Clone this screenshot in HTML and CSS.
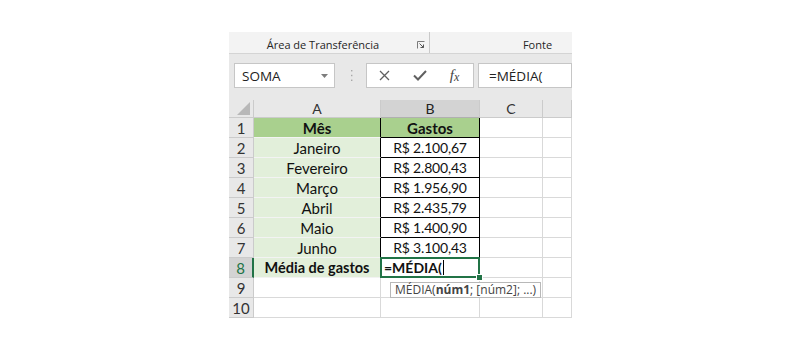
FILE: index.html
```html
<!DOCTYPE html>
<html lang="pt-BR">

<head>
    <meta charset="UTF-8">
    <title>Média de gastos</title>
    <link rel="stylesheet" href="styles.css">
</head>

<body>

    <div class="window">

        <!-- Ribbon group labels -->
        <div class="ribbon">
            <div class="group group-clip">
                <span class="group-label">Área de Transferência</span>
                <svg class="launcher" width="8" height="8" viewBox="0 0 8 8">
                    <path d="M0.5 7.5V0.5H7.5" fill="none" stroke="#7a7a7a" stroke-width="1"/>
                    <path d="M2.5 2.5L6.5 6.5M3.5 6.5H6.5V3.5" fill="none" stroke="#555" stroke-width="1"/>
                </svg>
            </div>
            <div class="group group-font">
                <span class="group-label">Fonte</span>
            </div>
        </div>

        <!-- Formula bar -->
        <div class="formula-bar">
            <div class="name-box">
                <span>SOMA</span>
                <svg width="7" height="4" viewBox="0 0 7 4"><path d="M0 0H7L3.5 4Z" fill="#7d7d7d"/></svg>
            </div>
            <div class="grip">
                <svg width="3" height="11" viewBox="0 0 3 11">
                    <rect x="1" y="0" width="1.4" height="1.4" fill="#a8a8a8"/>
                    <rect x="1" y="4.8" width="1.4" height="1.4" fill="#a8a8a8"/>
                    <rect x="1" y="9.6" width="1.4" height="1.4" fill="#a8a8a8"/>
                </svg>
            </div>
            <div class="fx-box">
                <span class="fx-btn">
                    <svg width="11" height="11" viewBox="0 0 11 11"><path d="M1 1L10 10M10 1L1 10" stroke="#606060" stroke-width="1.3"/></svg>
                </span>
                <span class="fx-btn">
                    <svg width="14" height="11" viewBox="0 0 14 11"><path d="M1 5.5L5 9.5L13 1" fill="none" stroke="#606060" stroke-width="2"/></svg>
                </span>
                <span class="fx-btn fx-label"><i>f</i><i class="x">x</i></span>
            </div>
            <div class="formula-input">=MÉDIA(</div>
        </div>

        <!-- Sheet -->
        <div class="grid">
            <div class="ch corner">
                <svg width="13" height="13" viewBox="0 0 13 13"><path d="M13 0V13H0Z" fill="#b8b8b8"/></svg>
            </div>
            <div class="ch">A</div>
            <div class="ch ch-active">B</div>
            <div class="ch">C</div>
            <div class="ch"></div>

            <div class="rh">1</div>
            <div class="c col-a head">Mês</div>
            <div class="c col-b head">Gastos</div>
            <div class="c"></div>
            <div class="c"></div>

            <div class="rh">2</div>
            <div class="c col-a fill">Janeiro</div>
            <div class="c col-b money">R$ 2.100,67</div>
            <div class="c"></div>
            <div class="c"></div>

            <div class="rh">3</div>
            <div class="c col-a fill">Fevereiro</div>
            <div class="c col-b money">R$ 2.800,43</div>
            <div class="c"></div>
            <div class="c"></div>

            <div class="rh">4</div>
            <div class="c col-a fill">Março</div>
            <div class="c col-b money">R$ 1.956,90</div>
            <div class="c"></div>
            <div class="c"></div>

            <div class="rh">5</div>
            <div class="c col-a fill">Abril</div>
            <div class="c col-b money">R$ 2.435,79</div>
            <div class="c"></div>
            <div class="c"></div>

            <div class="rh">6</div>
            <div class="c col-a fill">Maio</div>
            <div class="c col-b money">R$ 1.400,90</div>
            <div class="c"></div>
            <div class="c"></div>

            <div class="rh">7</div>
            <div class="c col-a fill">Junho</div>
            <div class="c col-b money">R$ 3.100,43</div>
            <div class="c"></div>
            <div class="c"></div>

            <div class="rh rh-active">8</div>
            <div class="c col-a fill bold">Média de gastos</div>
            <div class="c active">=MÉDIA(<span class="caret"></span>
                <div class="tooltip">MÉDIA(<b>núm1</b>; [núm2]; ...)</div>
            </div>
            <div class="c"></div>
            <div class="c"></div>

            <div class="rh">9</div>
            <div class="c"></div>
            <div class="c"></div>
            <div class="c"></div>
            <div class="c"></div>

            <div class="rh">10</div>
            <div class="c"></div>
            <div class="c"></div>
            <div class="c"></div>
            <div class="c"></div>
        </div>

    </div>

</body>

</html>
```

FILE: styles.css
```css
body {
    margin: 0;
    background: #fff;
    font-family: Lato, "Liberation Sans", sans-serif;
    color: #111;
}

.window {
    margin: 32px 0 0 229px;
    width: 343px;
    overflow: hidden;
}

/* ribbon */
.ribbon {
    display: flex;
    height: 22px;
    box-sizing: border-box;
    background: #f3f3f3;
    border-bottom: 1px solid #d4d4d4;
    font-family: "Open Sans", sans-serif;
    font-size: 11px;
    color: #262626;
}

.group {
    flex: none;
    display: flex;
    align-items: center;
    padding-top: 3px;
    box-sizing: border-box;
}

.group-clip {
    width: 201px;
    padding-right: 4px;
    border-right: 1px solid #c9c9c9;
}

.group-font {
    width: 215px;
}

.group-label {
    flex: 1;
    text-align: center;
}

.launcher {
    margin-top: 1px;
}

/* formula bar */
.formula-bar {
    display: flex;
    align-items: flex-start;
    height: 46px;
    box-sizing: border-box;
    padding: 9px 0 0 5px;
    background: #e8e8e8;
    font-family: "Open Sans", sans-serif;
    font-size: 13.5px;
    color: #222;
}

.name-box,
.fx-box,
.formula-input {
    height: 25px;
    box-sizing: border-box;
    background: #fff;
    border: 1px solid #c6c6c6;
    display: flex;
    align-items: center;
}

.name-box {
    flex: none;
    width: 101px;
    padding: 0 6px 0 7px;
    justify-content: space-between;
}

.grip {
    flex: none;
    height: 25px;
    display: flex;
    align-items: center;
    margin: 0 13px 0 15px;
}

.fx-box {
    flex: none;
    width: 108px;
}

.fx-btn {
    width: 35px;
    display: flex;
    justify-content: center;
}

.fx-label {
    font-family: "Liberation Serif", serif;
    font-size: 15px;
    color: #444;
}

.fx-label .x {
    font-size: 12px;
    margin-top: 3px;
}

.formula-input {
    flex: 1;
    margin-left: 4px;
    padding-left: 10px;
}

/* sheet grid */
.grid {
    display: grid;
    grid-template-columns: 25px 127px 99px 63px 29px;
    grid-template-rows: 18px repeat(10, 20px);
    font-size: 15px;
}

.grid > div {
    box-sizing: border-box;
    border-right: 1px solid #d9d9d9;
    border-bottom: 1px solid #d9d9d9;
    display: flex;
    align-items: center;
    justify-content: center;
    white-space: nowrap;
}

.ch,
.rh {
    background: #e8e8e8;
    color: #333;
}

.grid > .ch {
    border-color: #cbcbcb;
    font-size: 14px;
}

.grid > .rh {
    border-color: #cbcbcb;
}

.grid > .corner {
    justify-content: flex-end;
    align-items: flex-end;
    padding: 0 3px 2px 0;
}

.grid > .ch-active {
    background: #d3d3d3;
    color: #222;
    border-bottom-color: #b0b0b0;
}

.grid > .rh-active {
    background: #d3d3d3;
    color: #217346;
    border-right: 2px solid #217346;
}

.grid > .col-a {
    border-right-color: #000;
    border-bottom-color: #f3f3f3;
}

.grid > .col-b {
    border-right-color: #000;
    border-bottom-color: #000;
}

.money {
    font-size: 14px;
    letter-spacing: -0.2px;
}

.head {
    background: #a9d08e;
    font-weight: bold;
}

.fill {
    background: #e2efda;
}

.bold {
    font-weight: bold;
    font-size: 14.5px;
}

.grid > .active {
    position: relative;
    justify-content: flex-start;
    padding-left: 3px;
    font-weight: bold;
    font-size: 14px;
}

.active::before {
    content: "";
    position: absolute;
    top: -1px;
    left: -1px;
    right: -1px;
    bottom: -1px;
    border: 2px solid #217346;
}

.active::after {
    content: "";
    position: absolute;
    right: -4px;
    bottom: -4px;
    width: 5px;
    height: 5px;
    background: #217346;
    border: 1px solid #fff;
}

.caret {
    width: 1px;
    height: 15px;
    background: #000;
    margin-left: 1px;
}

.tooltip {
    position: absolute;
    left: 9px;
    top: 24px;
    padding: 0 4px;
    background: #fff;
    border: 1px solid #b8b8b8;
    font-family: "Open Sans", sans-serif;
    font-size: 12px;
    font-weight: normal;
    line-height: 14px;
    color: #444;
    z-index: 2;
}
```
